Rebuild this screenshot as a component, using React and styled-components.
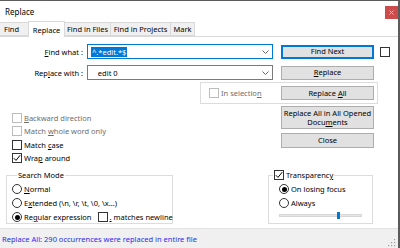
import React from 'react';
import styled, { createGlobalStyle } from 'styled-components';

const Global = createGlobalStyle`
  html, body { margin: 0; padding: 0; background: #fff; }
  body {
    font-family: "Segoe UI", "Noto Sans", sans-serif;
    font-size: 7.5px;
    color: #000;
  }
  * { box-sizing: border-box; }
`;

const Window = styled.div`
  width: 400px;
  height: 248px;
  display: flex;
  flex-direction: column;
  border-top: 1px solid #5b5b5b;
  border-right: 2px solid #5b5b5b;
  background: #fff;
  overflow: hidden;
`;

const TitleBar = styled.div`
  height: 20px;
  display: flex;
  justify-content: space-between;
  padding-left: 5px;
`;

const Title = styled.span`
  font-size: 8px;
  line-height: 21px;
`;

const CloseBtn = styled.div`
  width: 13px;
  height: 13px;
  margin-top: 5px;
  background: #cc4b4b;
  display: flex;
  align-items: center;
  justify-content: center;
`;

const TabStrip = styled.div`
  height: 16px;
  display: flex;
  align-items: flex-end;
  border-bottom: 1px solid #d9d9d9;
`;

const Tab = styled.div`
  width: ${p => p.$w}px;
  height: ${p => (p.$active ? 16 : 14)}px;
  margin-bottom: ${p => (p.$active ? -1 : 0)}px;
  background: ${p => (p.$active ? '#fff' : '#f0f0f0')};
  border: 1px solid #d9d9d9;
  border-bottom: ${p => (p.$active ? 'none' : '1px solid #d9d9d9')};
  margin-left: -1px;
  display: flex;
  align-items: center;
  justify-content: center;
  white-space: nowrap;
  position: relative;
  z-index: ${p => (p.$active ? 1 : 0)};
  &:first-child { margin-left: 0; border-left: none; justify-content: flex-start; padding-left: 4px; }
`;

const Panel = styled.div`
  flex: 1;
  display: flex;
  flex-direction: column;
  padding-top: 7px;
`;

const FieldRow = styled.div`
  display: grid;
  grid-template-columns: 83px 186px 93px 10px;
  column-gap: 4px;
  align-items: center;
  height: 15px;
  margin-bottom: ${p => p.$mb || 0}px;
  & > :nth-child(2) { margin-right: 4px; }
  & > :nth-child(3) { margin-left: 4px; }
  & > :nth-child(4) { margin-left: 6px; }
`;

const Label = styled.span`
  text-align: right;
  white-space: nowrap;
`;

const U = styled.span`
  text-decoration: underline;
`;

const Combo = styled.div`
  height: 15px;
  width: 186px;
  border: 1px solid ${p => (p.$focus ? '#0078d7' : '#7a7a7a')};
  display: flex;
  align-items: center;
  justify-content: space-between;
  padding: 0 3px 0 3px;
  background: #fff;
`;

const ComboText = styled.span`
  white-space: pre;
  line-height: 10px;
  padding: 0 1px;
  background: ${p => (p.$selected ? '#0078d7' : 'transparent')};
  color: ${p => (p.$selected ? '#fff' : '#000')};
`;

const Button = styled.div`
  width: 93px;
  height: ${p => p.$h || 14}px;
  background: #e1e1e1;
  border: 1px solid ${p => (p.$default ? '#0078d7' : '#adadad')};
  box-shadow: ${p => (p.$default ? 'inset 0 0 0 1px #0078d7' : 'none')};
  display: flex;
  align-items: center;
  justify-content: center;
  text-align: center;
  line-height: 9px;
  white-space: pre-line;
`;

const Box = styled.div`
  width: 10px;
  height: 10px;
  flex: none;
  margin-left: ${p => p.$gap || 0}px;
  border: 1px solid ${p => (p.$disabled ? '#bcbcbc' : '#333')};
  background: #fff;
  display: flex;
  align-items: center;
  justify-content: center;
`;

const Round = styled.div`
  width: 10px;
  height: 10px;
  flex: none;
  border-radius: 50%;
  border: 1px solid #333;
  background: #fff;
  display: flex;
  align-items: center;
  justify-content: center;
  &::after {
    content: '';
    display: ${p => (p.$on ? 'block' : 'none')};
    width: 5px;
    height: 5px;
    border-radius: 50%;
    background: #000;
  }
`;

const Option = styled.div`
  display: flex;
  align-items: center;
  gap: 2px;
  height: ${p => p.$h || 13.5}px;
  color: ${p => (p.$disabled ? '#6d6d6d' : '#000')};
  white-space: nowrap;
`;

const SelectionGroup = styled.div`
  margin: 2px 0 0 200px;
  width: 178px;
  height: 22px;
  border: 1px solid #dcdcdc;
  display: flex;
  align-items: center;
  justify-content: space-between;
  padding: 0 3px 0 8px;
`;

const Lower = styled.div`
  height: 66px;
  display: flex;
  justify-content: space-between;
`;

const OptionList = styled.div`
  padding: 7px 0 0 12px;
  display: flex;
  flex-direction: column;
`;

const ButtonColumn = styled.div`
  padding: 2px 24px 0 0;
  display: flex;
  flex-direction: column;
  gap: 4px;
`;

const Bottom = styled.div`
  display: flex;
  justify-content: space-between;
  padding: 0 25px 0 6px;
`;

const Group = styled.fieldset`
  margin: 0;
  width: ${p => p.$w}px;
  height: 54px;
  border: 1px solid #dcdcdc;
  padding: 2px 0 0 ${p => p.$pl}px;
  min-inline-size: 0;
`;

const Legend = styled.legend`
  padding: 0 1px;
  margin-left: ${p => p.$ml}px;
  line-height: 10px;
  display: flex;
  align-items: center;
  gap: 2px;
`;

const Slider = styled.div`
  margin-top: 5px;
  width: 83px;
  height: 3px;
  background: #e7e7e7;
  border: 1px solid #d6d6d6;
  display: flex;
  align-items: center;
  padding-left: 57px;
`;

const Thumb = styled.div`
  width: 3px;
  height: 7px;
  background: #0078d7;
  flex: none;
`;

const StatusBar = styled.div`
  height: 20px;
  background: #f0f0f0;
  border-top: 1px solid #e3e3e3;
  display: flex;
  align-items: center;
  justify-content: space-between;
  padding: 0 2px;
  color: #2b2bf0;
  font-size: 7.5px;
`;

const Check = () => (
  <svg width="8" height="8" viewBox="0 0 8 8">
    <path d="M0.8 4.2 L3 6.4 L7.2 1.2" fill="none" stroke="#000" strokeWidth="1" />
  </svg>
);

const Chevron = () => (
  <svg width="7" height="4" viewBox="0 0 7 4">
    <path d="M0.5 0.5 L3.5 3.5 L6.5 0.5" fill="none" stroke="#555" strokeWidth="0.9" />
  </svg>
);

const Grip = () => (
  <svg width="9" height="9" viewBox="0 0 9 9" style={{ alignSelf: 'flex-end', marginBottom: 1 }}>
    {[[7, 1], [7, 4], [4, 4], [7, 7], [4, 7], [1, 7]].map(([x, y]) => (
      <rect key={`${x}${y}`} x={x} y={y} width="1.2" height="1.2" fill="#a0a0a0" />
    ))}
  </svg>
);

const tabs = [
  ['Find', 29],
  ['Replace', 37],
  ['Find in Files', 47],
  ['Find in Projects', 61],
  ['Mark', 25],
];

export default function App() {
  return (
    <>
      <Global />
      <Window>
        <TitleBar>
          <Title>Replace</Title>
          <CloseBtn>
            <svg width="5" height="5" viewBox="0 0 5 5">
              <path d="M0.5 0.5 L4.5 4.5 M4.5 0.5 L0.5 4.5" stroke="#f3c8c8" strokeWidth="1" />
            </svg>
          </CloseBtn>
        </TitleBar>
        <TabStrip>
          {tabs.map(([t, w]) => (
            <Tab key={t} $w={w} $active={t === 'Replace'}>{t}</Tab>
          ))}
        </TabStrip>
        <Panel>
          <FieldRow $mb={6}>
            <Label><U>F</U>ind what :</Label>
            <Combo $focus>
              <ComboText $selected>^.*edit.*$</ComboText>
              <Chevron />
            </Combo>
            <Button $default>Find Next</Button>
            <Box />
          </FieldRow>
          <FieldRow>
            <Label>Rep<U>l</U>ace with :</Label>
            <Combo>
              <ComboText>{'   edit 0'}</ComboText>
              <Chevron />
            </Combo>
            <Button><span><U>R</U>eplace</span></Button>
          </FieldRow>
          <SelectionGroup>
            <Option $disabled>
              <Box $disabled />
              <span>In selectio<U>n</U></span>
            </Option>
            <Button>
              <span>Replace <U>A</U>ll</span>
            </Button>
          </SelectionGroup>
          <Lower>
            <OptionList>
              <Option $disabled><Box $disabled /><span><U>B</U>ackward direction</span></Option>
              <Option $disabled><Box $disabled /><span>Match <U>w</U>hole word only</span></Option>
              <Option><Box /><span>Match <U>c</U>ase</span></Option>
              <Option><Box><Check /></Box><span>Wra<U>p</U> around</span></Option>
            </OptionList>
            <ButtonColumn>
              <Button $h={23}>
                <span>Replace All in All Opened<br />Docu<U>m</U>ents</span>
              </Button>
              <Button $h={15}>Close</Button>
            </ButtonColumn>
          </Lower>
          <Bottom>
            <Group $w={167} $pl={5}>
              <Legend $ml={5}>Search Mode</Legend>
              <Option $h={14}><Round /><span><U>N</U>ormal</span></Option>
              <Option $h={14}><Round /><span>E<U>x</U>tended (\n, \r, \t, \0, \x...)</span></Option>
              <Option $h={14}>
                <Round $on />
                <span>Re<U>g</U>ular expression</span>
                <Box $gap={4} />
                <span><U>.</U> matches newline</span>
              </Option>
            </Group>
            <Group $w={105} $pl={10}>
              <Legend $ml={-6}>
                <Box><Check /></Box>
                <span>Transparenc<U>y</U></span>
              </Legend>
              <Option $h={14}><Round $on /><span>On losing focus</span></Option>
              <Option $h={13}><Round /><span>Always</span></Option>
              <Slider><Thumb /></Slider>
            </Group>
          </Bottom>
        </Panel>
        <StatusBar>
          <span>Replace All: 290 occurrences were replaced in entire file</span>
          <Grip />
        </StatusBar>
      </Window>
    </>
  );
}
